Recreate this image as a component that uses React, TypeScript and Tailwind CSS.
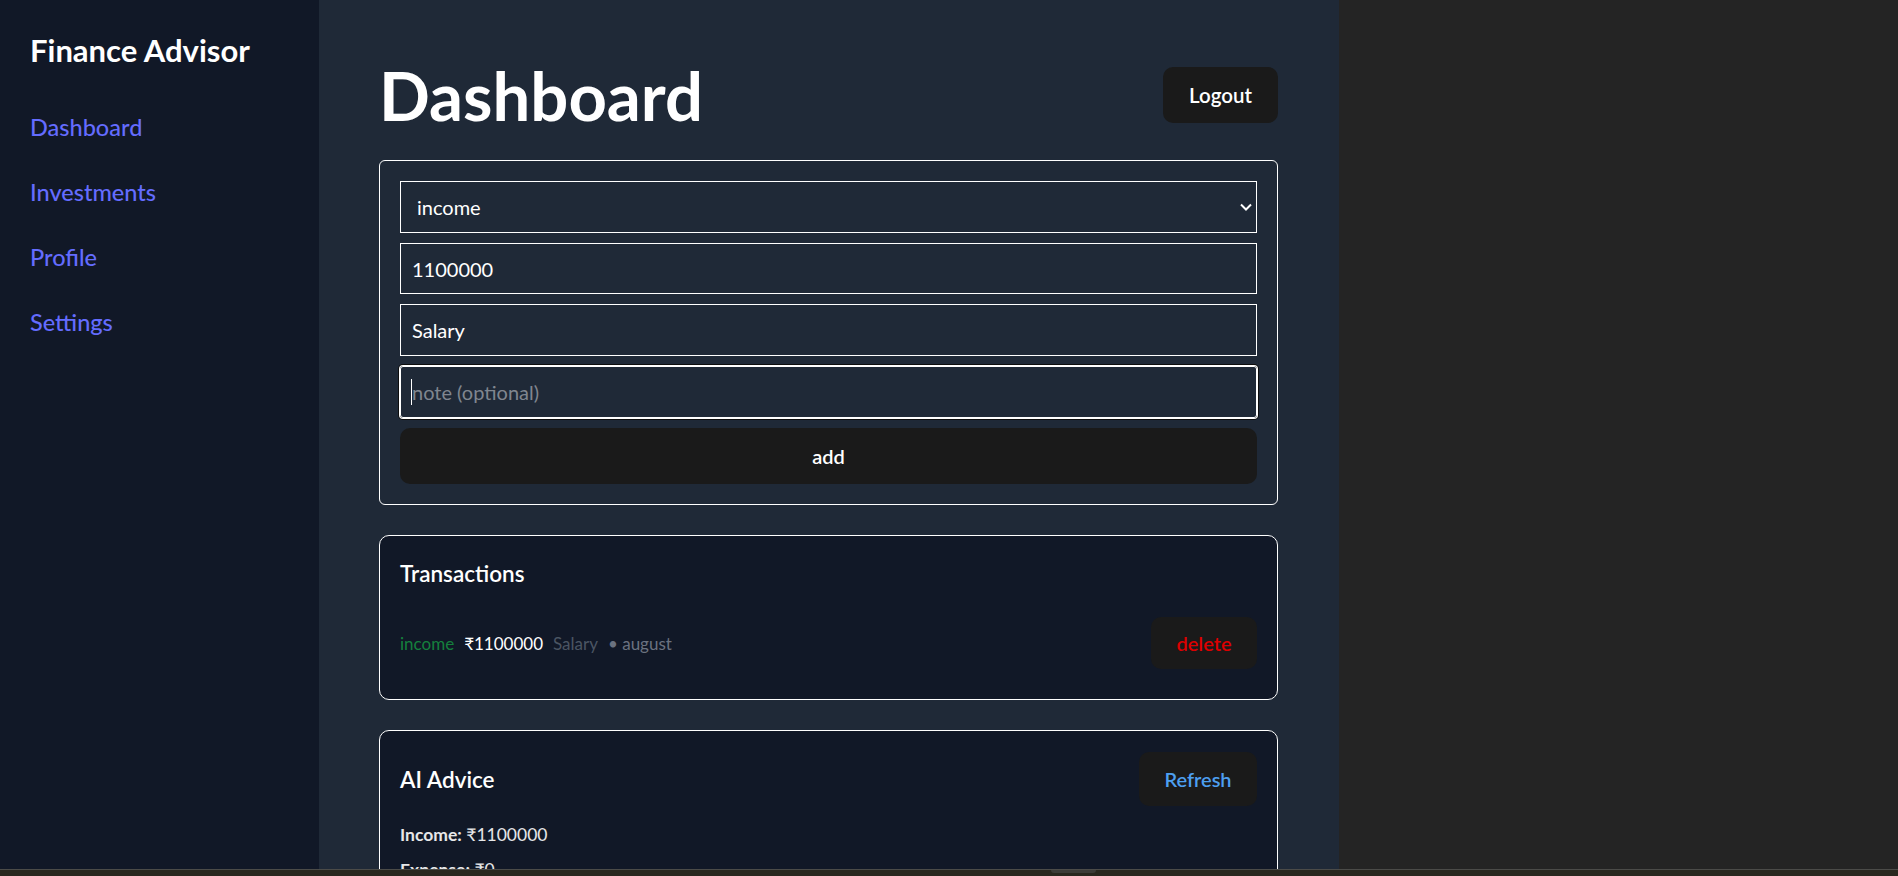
import { useState } from 'react';

type Txn = { type: 'income' | 'expense'; amount: number; category: string; month: string };

const navItems = ['Dashboard', 'Investments', 'Profile', 'Settings'];

function Sidebar() {
  return (
    <aside className="w-[319px] shrink-0 bg-[#111827] p-[30px]">
      <h2 className="text-[31px] leading-[40px] font-bold text-white">Finance Advisor</h2>
      <nav className="mt-[40px] flex flex-col gap-[30px]">
        {navItems.map(item => (
          <a key={item} href="#" className="text-[23.5px] leading-[35px] font-medium text-[#646cff]">
            {item}
          </a>
        ))}
      </nav>
    </aside>
  );
}

function AddForm() {
  const [type, setType] = useState('income');
  const [amount, setAmount] = useState('1100000');
  const [category, setCategory] = useState('Salary');
  const [note, setNote] = useState('');

  return (
    <div className="flex flex-col gap-[10px] rounded-[6px] border border-white p-[20px]">
      <div className="relative">
        <select
          value={type}
          onChange={e => setType(e.target.value)}
          className="h-[52px] w-full appearance-none border border-white bg-transparent pl-[16px] text-[20px] text-white outline-none"
        >
          <option value="income">income</option>
          <option value="expense">expense</option>
        </select>
        <svg
          className="pointer-events-none absolute right-[5px] top-[22px]"
          width="12"
          height="8"
          viewBox="0 0 12 8"
          fill="none"
          stroke="white"
          strokeWidth="2"
        >
          <path d="M1 1.5 L6 6.5 L11 1.5" />
        </svg>
      </div>
      <input
        value={amount}
        onChange={e => setAmount(e.target.value)}
        className="h-[51px] w-full border border-white bg-transparent px-[11px] text-[20px] text-white outline-none"
      />
      <input
        value={category}
        onChange={e => setCategory(e.target.value)}
        className="h-[52px] w-full border border-white bg-transparent px-[11px] text-[20px] text-white outline-none"
      />
      <div className="relative">
        <input
          value={note}
          placeholder="note (optional)"
          onChange={e => setNote(e.target.value)}
          className="h-[52px] w-full rounded-[3px] border border-white bg-transparent px-[11px] text-[20px] text-white shadow-[0_0_0_1px_#ffffff,0_0_0_2px_#0d0d0d] outline-none placeholder:text-[#80868f]"
        />
        <span className="pointer-events-none absolute left-[11px] top-[13px] h-[26px] w-px bg-white" />
      </div>
      <button className="h-[56px] w-full rounded-[10px] bg-[#1a1a1a] text-[20px] font-semibold text-white">
        add
      </button>
    </div>
  );
}

function Transactions({ items }: { items: Txn[] }) {
  return (
    <div className="mt-[30px] rounded-[10px] border border-white bg-[#111827] p-[20px]">
      <h3 className="text-[22.5px] leading-[35px] font-semibold text-white">Transactions</h3>
      <div className="mt-[16px]">
        {items.map((t, i) => (
          <div key={i} className="flex items-center justify-between py-[10px]">
            <div className="flex items-center gap-[10px] text-[17px] leading-[25px]">
              <span className="text-[#15803d]">{t.type}</span>
              <span className="text-white">₹{t.amount}</span>
              <span className="text-[#4b5563]">{t.category}</span>
              <span className="text-[#6b7280]">• {t.month}</span>
            </div>
            <button className="h-[52px] w-[106px] rounded-[10px] bg-[#1a1a1a] text-[20px] font-semibold text-[#dc0000]">
              delete
            </button>
          </div>
        ))}
      </div>
    </div>
  );
}

function Advice() {
  return (
    <div className="mt-[30px] rounded-[10px] border border-white bg-[#111827] px-[20px] pt-[21px] pb-[20px]">
      <div className="flex items-center justify-between">
        <h3 className="text-[22.5px] leading-[35px] font-semibold text-white">AI Advice</h3>
        <button className="h-[54px] w-[118px] rounded-[10px] bg-[#1a1a1a] text-[20px] font-semibold text-[#4d9ff0]">
          Refresh
        </button>
      </div>
      <p className="mt-[16px] text-[17.5px] leading-[25px] text-white/90">
        <span className="font-bold">Income:</span> ₹1100000
      </p>
      <p className="mt-[10px] text-[17.5px] leading-[25px] text-white/90">
        <span className="font-bold">Expense:</span> ₹0
      </p>
      <p className="mt-[10px] text-[17.5px] leading-[25px] text-white/90">
        <span className="font-bold">Savings:</span> ₹1100000
      </p>
    </div>
  );
}

export default function App() {
  const txns: Txn[] = [{ type: 'income', amount: 1100000, category: 'Salary', month: 'august' }];

  return (
    <div className="flex h-[876px] w-full flex-col overflow-hidden font-['Lato',sans-serif]">
      <div className="flex h-[869px] overflow-hidden">
        <Sidebar />
        <main className="w-[1020px] shrink-0 overflow-hidden bg-[#1f2937] pt-[60px] pl-[60px] pr-[61px]">
          <div className="mb-[30px] flex items-center justify-between">
            <h1 className="text-[67px] leading-[70px] font-bold text-white">Dashboard</h1>
            <button className="h-[56px] w-[115px] rounded-[10px] bg-[#1a1a1a] text-[20.5px] font-semibold text-white">
              Logout
            </button>
          </div>
          <AddForm />
          <Transactions items={txns} />
          <Advice />
        </main>
        <div className="flex-1 bg-[#242424]" />
      </div>
      <div className="h-[7px] border-t border-[#4b4b48] bg-[#29281f]">
        <div className="ml-[1051px] h-[3px] w-[45px] rounded-b-sm bg-[#3c3c38]" />
      </div>
    </div>
  );
}
